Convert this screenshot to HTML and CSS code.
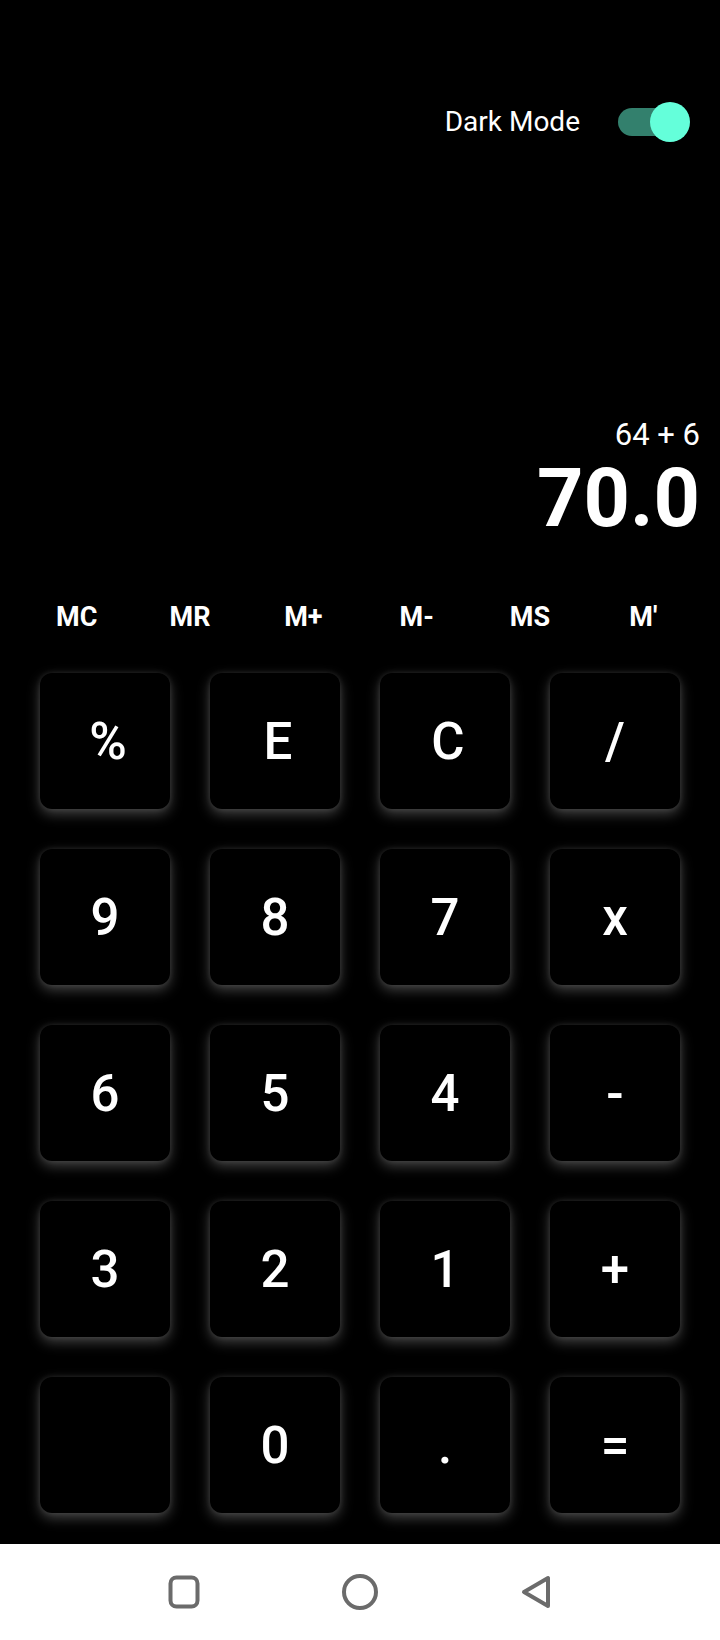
FILE: index.html
```html
<!DOCTYPE html>
<html>
<head>
<meta charset="utf-8">
<link rel="stylesheet" href="styles.css">
</head>
<body>
<div class="app">
  <div class="topbar">
    <span class="mode-label">Dark Mode</span>
    <div class="switch"><div class="track"></div><div class="knob"></div></div>
  </div>
  <div class="display">
    <div class="expr">64 + 6</div>
    <div class="result">70.0</div>
  </div>
  <div class="memory">
    <span>MC</span><span>MR</span><span>M+</span><span>M-</span><span>MS</span><span>M'</span>
  </div>
  <div class="keypad">
    <div class="key shift">%</div><div class="key shift">E</div><div class="key shift">C</div><div class="key">/</div>
    <div class="key">9</div><div class="key">8</div><div class="key">7</div><div class="key">x</div>
    <div class="key">6</div><div class="key">5</div><div class="key">4</div><div class="key">-</div>
    <div class="key">3</div><div class="key">2</div><div class="key">1</div><div class="key">+</div>
    <div class="key"></div><div class="key">0</div><div class="key">.</div><div class="key">=</div>
  </div>
</div>
<div class="navbar">
  <svg class="nav-icon" viewBox="0 0 40 40" width="40" height="40"><rect x="6.5" y="5.5" width="27" height="29" rx="6" fill="none" stroke="#6b6b6b" stroke-width="4"/></svg>
  <svg class="nav-icon" viewBox="0 0 40 40" width="40" height="40"><circle cx="20" cy="20" r="16" fill="none" stroke="#6b6b6b" stroke-width="4"/></svg>
  <svg class="nav-icon" viewBox="0 0 40 40" width="40" height="40"><path d="M8 20 L32 6 L32 34 Z" fill="none" stroke="#6b6b6b" stroke-width="4" stroke-linejoin="round"/></svg>
</div>
</body>
</html>
```
FILE: styles.css
```css
html, body {
  margin: 0;
  padding: 0;
  background: #000;
  font-family: Roboto, "Liberation Sans", sans-serif;
  color: #fff;
}
.app {
  height: 1544px;
  display: flex;
  flex-direction: column;
  background: #000;
  overflow: hidden;
}
.topbar {
  margin-top: 100px;
  height: 44px;
  display: flex;
  justify-content: flex-end;
  align-items: center;
  padding-right: 30px;
  gap: 38px;
}
.mode-label {
  font-size: 28px;
  line-height: 44px;
  font-weight: 400;
}
.switch {
  position: relative;
  width: 72px;
  height: 40px;
}
.track {
  position: absolute;
  left: 0;
  top: 6px;
  width: 64px;
  height: 28px;
  border-radius: 14px;
  background: #33806d;
}
.knob {
  position: absolute;
  right: 0;
  top: 0;
  width: 40px;
  height: 40px;
  border-radius: 50%;
  background: #64ffda;
}
.display {
  margin-top: 274px;
  padding-right: 20px;
  text-align: right;
}
.expr {
  font-size: 31px;
  line-height: 34px;
}
.result {
  font-size: 81px;
  line-height: 94px;
  font-weight: 700;
}
.memory {
  margin: 56px 20px 0;
  display: grid;
  grid-template-columns: repeat(6, 1fr);
  font-size: 27px;
  line-height: 30px;
  font-weight: 700;
  text-align: center;
}
.keypad {
  margin-top: 41px;
  padding: 0 40px;
  display: grid;
  grid-template-columns: repeat(4, 130px);
  grid-auto-rows: 136px;
  gap: 40px;
}
.key {
  background: #000;
  border-radius: 12px;
  box-shadow: 0 5px 13px rgba(255, 255, 255, 0.26), 0 0 6px rgba(255, 255, 255, 0.1);
  display: flex;
  align-items: center;
  justify-content: center;
  font-size: 51px;
  font-weight: 500;
}
.key.shift {
  padding-left: 6px;
}
.navbar {
  height: 96px;
  background: #fff;
  display: flex;
  justify-content: center;
  align-items: center;
  gap: 136px;
}
.nav-icon {
  display: block;
}
```
